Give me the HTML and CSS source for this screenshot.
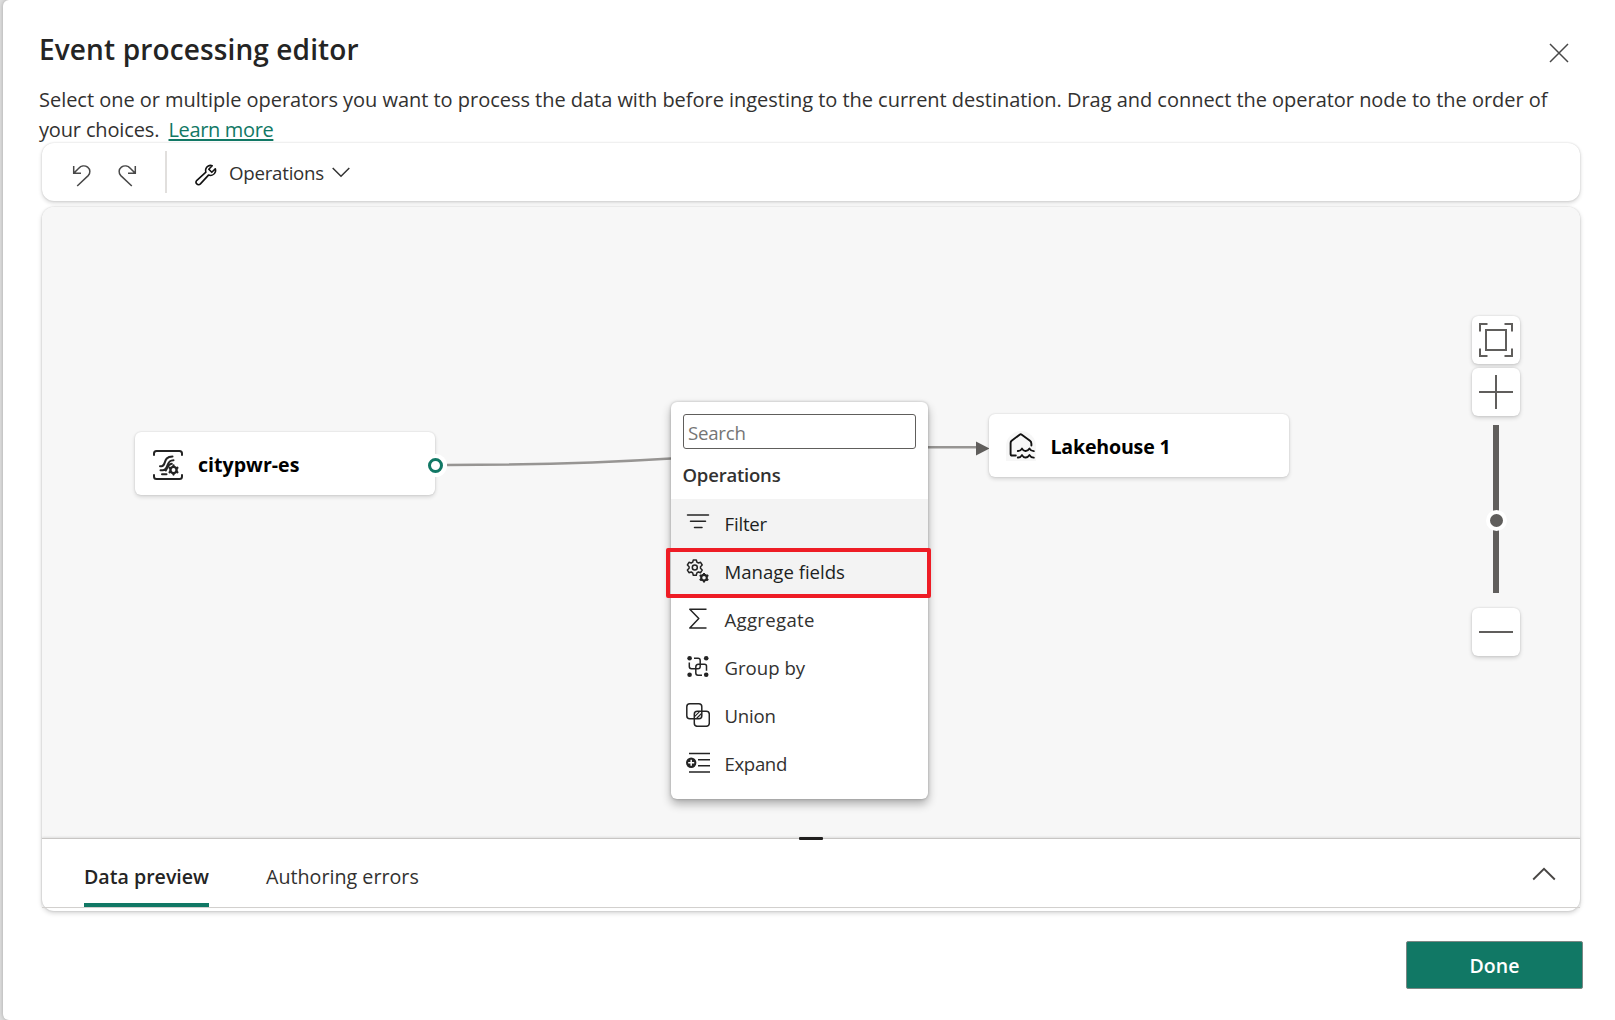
FILE: index.html
```html
<!DOCTYPE html>
<html lang="en">
<head>
<meta charset="utf-8">
<title>Event processing editor</title>
<link rel="stylesheet" href="styles.css">
</head>
<body>
<main class="dialog">
  <header class="header">
    <h1 class="title">Event processing editor</h1>
    <button class="close" aria-label="Close">
      <svg width="20" height="20" viewBox="0 0 20 20"><path d="M1 1 19 19M19 1 1 19" fill="none" stroke="#484848" stroke-width="1.5"/></svg>
    </button>
  </header>
  <p class="description">Select one or multiple operators you want to process the data with before ingesting to the current destination. Drag and connect the operator node to the order of<br><span class="choices">your choices.</span><a class="learn" href="#">Learn more</a></p>

  <div class="toolbar">
    <button class="tool" aria-label="Undo">
      <svg width="20" height="24" viewBox="0 0 20 24"><path d="M1.700 2V9.300H9M2 9 6.500 4.400C9 1.700 12.700 1 15.600 3.200 18.400 5.400 18.600 9.200 16.200 11.600L5.200 22" fill="none" stroke="#484848" stroke-width="1.500"/></svg>
    </button>
    <button class="tool" aria-label="Redo">
      <svg width="20" height="24" viewBox="0 0 20 24"><path d="M18.300 2V9.300H11M18 9 13.500 4.400C11 1.700 7.300 1 4.400 3.200 1.600 5.400 1.400 9.200 3.800 11.600L14.800 22" fill="none" stroke="#484848" stroke-width="1.500"/></svg>
    </button>
    <span class="divider"></span>
    <button class="operations">
      <svg width="22" height="22" viewBox="0 0 22 22"><path d="M17.200 1.700C14.500.8 11.500 2.200 10.800 5 10.500 6.200 10.600 7.200 10.900 8.200L1.900 16.300C.9 17.300.8 18.900 1.800 19.900 2.800 20.900 4.400 20.900 5.400 19.900L13.500 11.100C16.300 12 19.300 10.700 20.300 7.900 20.700 6.800 20.600 5.700 20.300 4.800L16.800 8.300 13.800 5.200Z" fill="none" stroke="#111" stroke-width="1.600" stroke-linejoin="round"/></svg>
      <span class="operations-label">Operations</span>
      <svg width="18" height="11" viewBox="0 0 18 11"><path d="M.7 1 9 9.300 17.300 1" fill="none" stroke="#333" stroke-width="1.500"/></svg>
    </button>
  </div>

  <section class="workspace">
    <div class="canvas">
      <svg class="edges" width="1538" height="631" viewBox="42 207 1538 631">
        <path d="M447 465C525 465 600 463 671 458.500M928 447.300H978" fill="none" stroke="#979593" stroke-width="2.600"/>
        <path d="M976 441.500V455.500L989.500 448.500Z" fill="#605e5c"/>
      </svg>

      <div class="node source">
        <svg width="30" height="30" viewBox="0 0 30 30" fill="none" stroke="#242424" stroke-width="2" stroke-linecap="round">
          <path d="M1 5V3.500Q1 1 3.500 1H26.500Q29 1 29 3.500V5M1 25V26.500Q1 29 3.500 29H26.500Q29 29 29 26.500V25"/>
          <path d="M7 16.300H8.500C13.500 16.300 9.500 6.500 19.500 6.500M7.500 20.300H9.500C16.500 20.300 12 10.300 20.500 10.300M9 24.200H13.500M12.800 20.500C14.500 18.500 14.500 14.300 18.800 13.800"/>
          <circle cx="20.500" cy="20" r="3.100" stroke-width="2.400"/>
          <path d="M20.500 15.500V16.500M20.500 23.500V24.500M16.600 17.800 17.300 18.200M24.400 17.800 23.700 18.200M16.600 22.200 17.300 21.800M24.400 22.200 23.700 21.800" stroke-width="2.300"/>
        </svg>
        <span class="node-name">citypwr-es</span>
        <span class="port"></span>
      </div>

      <div class="node target">
        <span class="lake">
          <svg width="30" height="30" viewBox="0 0 30 30" fill="none" stroke="#111" stroke-width="1.900" stroke-linejoin="round" stroke-linecap="round">
            <path d="M9.800 24.500H6.200Q4.600 24.500 4.600 22.900V12Q4.600 10.700 5.600 9.800L13.600 3.700Q14.700 2.900 15.800 3.700L24 9.800Q25.400 10.900 25.400 12.700V14.500"/>
            <path d="M11.800 20Q14.500 20.200 16 17.600 17.500 20.200 19.700 20 22 20 23.500 17.600 24.700 19.900 27.800 20.100M11.800 26.500Q14.500 26.700 16 24.100 17.500 26.700 19.700 26.500 22 26.500 23.500 24.100 24.700 26.400 27.800 26.600"/>
          </svg>
        </span>
        <span class="node-name lakehouse">Lakehouse 1</span>
      </div>

      <div class="menu">
        <input class="search" type="text" placeholder="Search">
        <h2 class="menu-title">Operations</h2>
        <ul class="items">
          <li class="item hover">
            <svg class="icon" viewBox="0 0 24 24"><path d="M1.500 3.900H22.500M4.500 10.200H19.500M8.500 16.400H16" fill="none" stroke="#242424" stroke-width="1.500" stroke-linecap="round"/></svg>
            <span class="filter">Filter</span>
          </li>
          <li class="item hover">
            <svg class="icon" viewBox="0 0 24 24" fill="none" stroke="#242424" stroke-linejoin="round">
              <path d="M7.300.900H10.300L10.900 3.200 12.400 4 14.600 3.300 16.200 6 14.500 7.700V9.300L16.200 11 14.600 13.700 12.400 13 10.900 13.900 10.300 16.200H7.300L6.700 13.900 5.200 13 3 13.700 1.400 11 3.100 9.300V7.700L1.400 6 3 3.300 5.200 4 6.700 3.200Z" stroke-width="1.500"/>
              <circle cx="8.800" cy="8.500" r="2.500" stroke-width="1.500"/>
              <circle cx="18" cy="18.700" r="2.800" stroke-width="2.100"/>
              <path d="M18 14V16M18 21.400V23.600M13.700 16.200 15.600 17.300M22.300 16.200 20.400 17.300M13.700 21.200 15.600 20.100M22.300 21.200 20.400 20.100" stroke-width="2"/>
            </svg>
            <span class="manage">Manage fields</span>
          </li>
          <li class="item">
            <svg class="icon" viewBox="0 0 24 24"><path d="M20.500 2.200H3.800L12.800 11.500 3.800 20.900H20.500" fill="none" stroke="#242424" stroke-width="1.500" stroke-linejoin="round"/></svg>
            <span class="aggregate">Aggregate</span>
          </li>
          <li class="item">
            <svg class="icon" viewBox="0 0 24 24">
              <path d="M8 3.300H12Q14.200 3.300 14.200 5.500V11.500Q14.200 13.800 12 13.800H5.500Q3.300 13.800 3.300 11.600V7.500M16 20.200H12Q9.800 20.200 9.800 18V12Q9.800 9.200 12.500 9.200H18.500Q20.500 9.200 20.500 11.200V15.800" fill="none" stroke="#242424" stroke-width="1.500"/>
              <g fill="#242424"><circle cx="3.600" cy="3.300" r="2.300"/><circle cx="20.200" cy="3.300" r="2.300"/><circle cx="3.600" cy="19.800" r="2.300"/><circle cx="20.200" cy="19.800" r="2.300"/></g>
            </svg>
            <span class="group">Group by</span>
          </li>
          <li class="item">
            <svg class="icon" viewBox="0 0 24 24" fill="none" stroke="#242424" stroke-width="1.500">
              <rect x=".8" y=".8" width="15" height="15" rx="3"/>
              <rect x="8.300" y="8.300" width="15" height="15" rx="3"/>
              <path d="M8.800 13.300 13.300 8.800M10.500 15.500 15.500 10.500" stroke-width="1.200"/>
            </svg>
            <span class="union">Union</span>
          </li>
          <li class="item">
            <svg class="icon" viewBox="0 0 24 24">
              <path d="M3 2.500H24M12 8.800H24M12 14.700H24M3 20.900H24" fill="none" stroke="#242424" stroke-width="1.500"/>
              <circle cx="5.200" cy="11.700" r="5.200" fill="#242424"/>
              <path d="M5.200 8.700V14.700M2.200 11.700H8.200" stroke="#fff" stroke-width="1.500"/>
            </svg>
            <span class="expand">Expand</span>
          </li>
        </ul>
        <span class="highlight"></span>
      </div>

      <div class="zoom">
        <button class="zoom-button" aria-label="Zoom to fit">
          <svg width="34" height="34" viewBox="0 0 34 34" fill="none" stroke="#605e5c" stroke-width="2"><path d="M1 8.500V1H8.500M25.500 1H33V8.500M33 25.500V33H25.500M8.500 33H1V25.500"/><rect x="7" y="7" width="20" height="20"/></svg>
        </button>
        <button class="zoom-button" aria-label="Zoom in">
          <svg width="34" height="34" viewBox="0 0 34 34"><path d="M0 17H34M17 0V34" stroke="#605e5c" stroke-width="2"/></svg>
        </button>
        <div class="slider"><span class="knob"></span></div>
        <button class="zoom-button" aria-label="Zoom out">
          <svg width="34" height="34" viewBox="0 0 34 34"><path d="M0 17H34" stroke="#605e5c" stroke-width="2"/></svg>
        </button>
      </div>
    </div>

    <div class="panel">
      <span class="handle"></span>
      <nav class="tabs">
        <a class="tab active">Data preview</a>
        <a class="tab">Authoring errors</a>
      </nav>
      <svg class="chevron" width="24" height="14" viewBox="0 0 24 14"><path d="M1.200 12.500 12 1.800 22.800 12.500" fill="none" stroke="#484644" stroke-width="1.900"/></svg>
    </div>
  </section>

  <footer class="footer"><button class="done">Done</button></footer>
</main>
</body>
</html>
```
FILE: styles.css
```css
* { box-sizing: border-box; }

body {
  margin: 0;
  height: 1020px;
  padding-left: 3px;
  overflow: hidden;
  background: #dedede;
  color: #323130;
  font-family: "Open Sans", "Noto Sans", sans-serif;
  font-size: 20px;
}

button {
  padding: 0;
  border: 0;
  background: none;
  color: inherit;
  font: inherit;
}

svg { display: block; flex: none; }

.dialog {
  display: flex;
  flex-direction: column;
  height: 1020px;
  padding: 29px 35px 0 39px;
  border-radius: 6px 0 0 6px;
  background: #fff;
  box-shadow: 0 0 4px rgba(0, 0, 0, .25);
}

.header {
  display: flex;
  justify-content: space-between;
  height: 56px;
  margin-left: -3px;
}

.title {
  margin: 0;
  color: #242424;
  font-size: 28px;
  font-weight: 600;
  letter-spacing: .13px;
  line-height: 40px;
}

.close { align-self: flex-start; margin: 14px 11px 0 0; }

.description {
  height: 60px;
  margin: 0 0 -2px -3px;
  letter-spacing: -.03px;
  line-height: 30px;
  white-space: nowrap;
}

.choices {
  display: inline-block;
  width: 129.500px;
  letter-spacing: -.15px;
}

.learn {
  color: #117865;
  letter-spacing: -.35px;
  text-decoration: underline;
  text-decoration-thickness: 2px;
  text-underline-offset: 2px;
}

.toolbar {
  display: flex;
  flex: none;
  align-items: center;
  height: 58px;
  padding-left: 30px;
  border-radius: 12px;
  background: #fff;
  box-shadow: 0 0 2px rgba(0, 0, 0, .16), 0 2px 4px rgba(0, 0, 0, .16);
}

.tool { margin: 7px 25px 0 0; }

.divider {
  width: 2px;
  height: 42px;
  margin: 0 28px 0 3px;
  background: #e1dfdd;
}

.operations { display: flex; align-items: center; gap: 8px; }
.operations svg:first-child { margin: 5px 4px 0 0; }
.operations-label { font-size: 18.700px; letter-spacing: -.25px; }

.workspace {
  display: flex;
  flex: none;
  flex-direction: column;
  height: 704px;
  margin-top: 6px;
  border-radius: 12px;
  background: #fff;
  box-shadow: 0 0 2px rgba(0, 0, 0, .18), 0 2px 5px rgba(0, 0, 0, .18);
}

.canvas {
  position: relative;
  height: 631px;
  border-radius: 12px 12px 0 0;
  background: #f7f7f7;
}

.edges { position: absolute; inset: 0; }

.node {
  position: absolute;
  display: flex;
  align-items: center;
  width: 300px;
  height: 63px;
  padding-left: 18px;
  gap: 15px;
  border-radius: 6px;
  background: #fff;
  box-shadow: 0 0 2px rgba(0, 0, 0, .14), 0 2px 4px rgba(0, 0, 0, .14);
}

.source { left: 93px; top: 225px; }
.source svg { margin-top: 3px; }
.target { left: 946.500px; top: 207px; padding-left: 17px; }

.node-name {
  margin-top: 2px;
  color: #000;
  font-size: 19.600px;
  font-weight: 700;
}

.lakehouse { letter-spacing: -.2px; }

.lake {
  margin-top: 1px;
  border-radius: 15px 15px 0 0;
  background: #f7f7f7;
}

.port {
  position: absolute;
  left: 293px;
  top: 26px;
  width: 15px;
  height: 15px;
  border: 3px solid #117865;
  border-radius: 50%;
  background: #fff;
  box-shadow: 0 0 0 4px #fff;
}

.menu {
  position: absolute;
  left: 629px;
  top: 195px;
  width: 257px;
  height: 397px;
  padding-top: 12px;
  border-radius: 6px;
  background: #fff;
  box-shadow: 0 0 3px rgba(0, 0, 0, .25), 0 5px 10px rgba(0, 0, 0, .3);
}

.search {
  display: block;
  width: 233px;
  height: 35px;
  margin: 0 12px;
  padding: 1px 5px 0 4px;
  border: 1px solid #605e5c;
  border-radius: 3px;
  outline: 0;
  font: 18.700px "Open Sans", sans-serif;
  letter-spacing: -.25px;
}

.search::placeholder { color: #757575; }

.menu-title {
  height: 50px;
  margin: 0;
  padding: 12px 11.500px 0;
  font-size: 18.500px;
  font-weight: 600;
  letter-spacing: -.2px;
  line-height: 28px;
}

.items { margin: 0; padding: 0; list-style: none; }

.item {
  display: flex;
  align-items: center;
  height: 48px;
  padding-left: 15px;
  gap: 14.500px;
  font-size: 18.600px;
}

.hover { background: #f3f3f3; color: #201f1e; }
.icon { width: 24px; height: 24px; margin-top: -1px; }
.filter, .union { letter-spacing: -.2px; }
.aggregate { letter-spacing: .3px; }
.expand { letter-spacing: -.35px; }

.highlight {
  position: absolute;
  left: -5px;
  top: 146px;
  width: 265px;
  height: 50px;
  border: 4px solid #ee1c25;
  border-radius: 2px;
}

.zoom {
  position: absolute;
  left: 1430px;
  top: 109px;
  display: flex;
  flex-direction: column;
  align-items: center;
}

.zoom-button {
  display: grid;
  place-items: center;
  width: 48px;
  height: 48px;
  margin-bottom: 4px;
  border-radius: 6px;
  background: #fff;
  box-shadow: 0 0 2px rgba(0, 0, 0, .15), 0 2px 4px rgba(0, 0, 0, .16);
}

.slider {
  display: flex;
  justify-content: center;
  width: 6px;
  height: 168px;
  margin: 5px 0 15px;
  background: #605e5c;
}

.knob {
  flex: none;
  width: 21px;
  height: 21px;
  margin-top: 85px;
  border: 4px solid #fff;
  border-radius: 50%;
  background: #605e5c;
}

.panel {
  position: relative;
  display: flex;
  align-items: flex-start;
  justify-content: space-between;
  height: 70px;
  padding: 0 24px 0 42px;
  border-top: 1px solid #c8c6c4;
  border-bottom: 1px solid #d2d0ce;
  box-shadow: 0 -1px 2px rgba(0, 0, 0, .1);
}

.handle {
  position: absolute;
  left: 757px;
  top: -2px;
  width: 24px;
  height: 3px;
  border-radius: 1px;
  background: #201f1e;
}

.tabs { display: flex; gap: 57px; }

.tab {
  height: 68px;
  padding-top: 22.500px;
  font-size: 19.700px;
  line-height: 30px;
  white-space: nowrap;
}

.active {
  width: 125px;
  background: linear-gradient(#117865, #117865) 0 64px / 125px 4px no-repeat;
  color: #242424;
  font-size: 19.600px;
  font-weight: 600;
}

.chevron { margin-top: 28px; }

.footer {
  display: flex;
  justify-content: flex-end;
  margin: 30px -3px 0 0;
}

.done {
  width: 177px;
  height: 48px;
  border: 1px solid #7b8784;
  border-radius: 2px;
  background: #117865;
  color: #fff;
  font-size: 19.500px;
  font-weight: 600;
}
```
